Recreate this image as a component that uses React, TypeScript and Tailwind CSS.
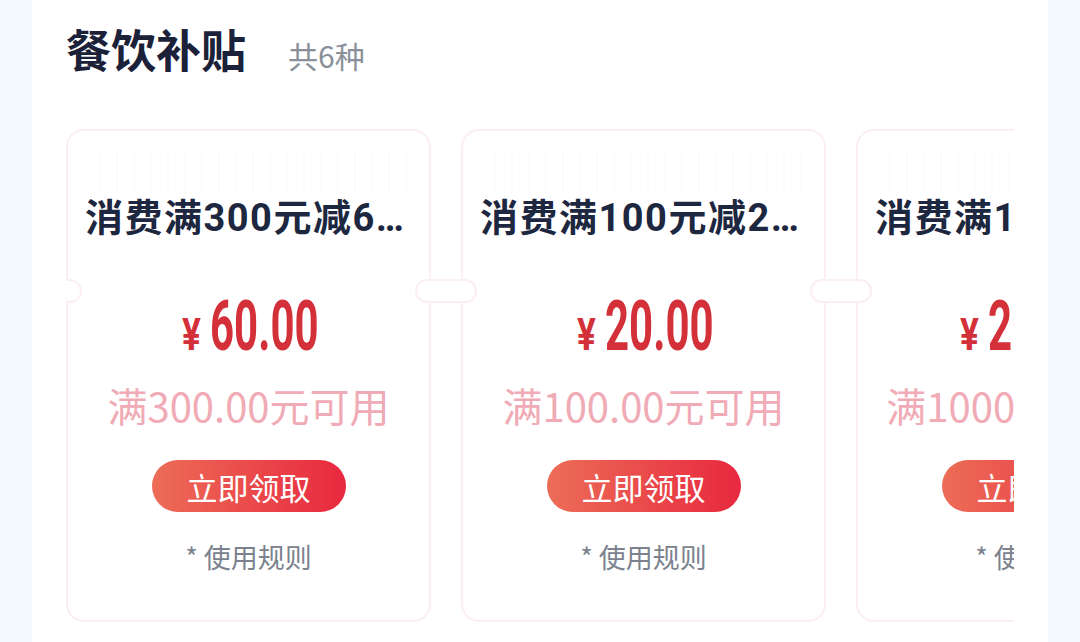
import React from "react";

const cards = [
  { title: "消费满300元减60元", price: "60.00", cond: "满300.00元可用" },
  { title: "消费满100元减20元", price: "20.00", cond: "满100.00元可用" },
  { title: "消费满1000元减200元", price: "200.00", cond: "满1000.00元可用" },
];

const CJK = { fontFamily: '"Noto Sans CJK SC", "Noto Sans", sans-serif' };
const TITLE = { fontFamily: 'Roboto, "Noto Sans CJK SC", sans-serif' };
const NUM = { fontFamily: 'Roboto, "Liberation Sans", sans-serif' };

function priceWidth(p: string) {
  let w = 0;
  for (const ch of p) w += ch === "." ? 18.9 : 39.3;
  return Math.round(w * 0.6);
}

function Card({ title, price, cond, last }: { title: string; price: string; cond: string; last: boolean }) {
  return (
    <div className="relative w-[365px] h-[493px] shrink-0 rounded-[18px] border-2 border-[#fcefef] bg-white flex flex-col items-center">
      <div className="absolute left-[16px] right-[16px] top-[20px] h-[42px] bg-[repeating-linear-gradient(90deg,transparent_0px,transparent_15px,rgba(0,0,0,0.01)_15px,rgba(0,0,0,0.01)_17px)]" />
      <div className="absolute left-[-2px] top-[148px] w-[16px] h-[24px] rounded-r-full bg-white border-2 border-l-0 border-[#fcefef]" />
      {!last && (
        <div className="absolute z-10 right-[-48px] top-[148px] w-[62px] h-[24px] rounded-full bg-white border-2 border-[#fcefef]" />
      )}
      <div className="w-full px-[17px] mt-[64px] text-[38px] leading-[46px] font-bold tracking-[1.5px] text-[#1d2740] truncate" style={TITLE}>
        {title}
      </div>
      <div className="mt-[50px] h-[70px] flex items-baseline justify-center text-[#d3303a]">
        <span className="inline-block w-[21px] mr-[7px] whitespace-nowrap" style={NUM}>
          <span className="inline-block origin-left scale-x-[0.8] text-[44px] leading-none font-bold">¥</span>
        </span>
        <span className="inline-block whitespace-nowrap" style={{ ...NUM, width: priceWidth(price) }}>
          <span className="inline-block origin-left scale-x-[0.6] text-[70px] leading-none font-bold">{price}</span>
        </span>
      </div>
      <div className="mt-[20px] text-[40px] leading-[48px] text-[#f0abb6] whitespace-nowrap" style={CJK}>
        {cond}
      </div>
      <div
        className="mt-[31px] w-[194px] h-[52px] shrink-0 rounded-full bg-[linear-gradient(90deg,#ec6d57,#e8283f)] flex items-center justify-center text-white text-[31px] leading-none"
        style={CJK}
      >
        立即领取
      </div>
      <div className="mt-[29px] text-[27px] leading-[32px] text-[#7b828d] whitespace-nowrap" style={CJK}>
        * 使用规则
      </div>
    </div>
  );
}

export default function App() {
  return (
    <div className="w-[1080px] h-[642px] bg-[#f3f9fc] px-[32px] overflow-hidden">
      <div className="h-full bg-white px-[34px] pt-[20px]">
        <div className="flex items-baseline h-[58px]" style={CJK}>
          <span className="text-[45px] font-bold text-[#1b2138] leading-[58px]">餐饮补贴</span>
          <span className="ml-[42px] text-[30px] text-[#8a9099]">共6种</span>
        </div>
        <div className="mt-[51px] flex gap-[30px] overflow-hidden">
          {cards.map((c, i) => (
            <Card key={c.title} {...c} last={i === cards.length - 1} />
          ))}
        </div>
      </div>
    </div>
  );
}
